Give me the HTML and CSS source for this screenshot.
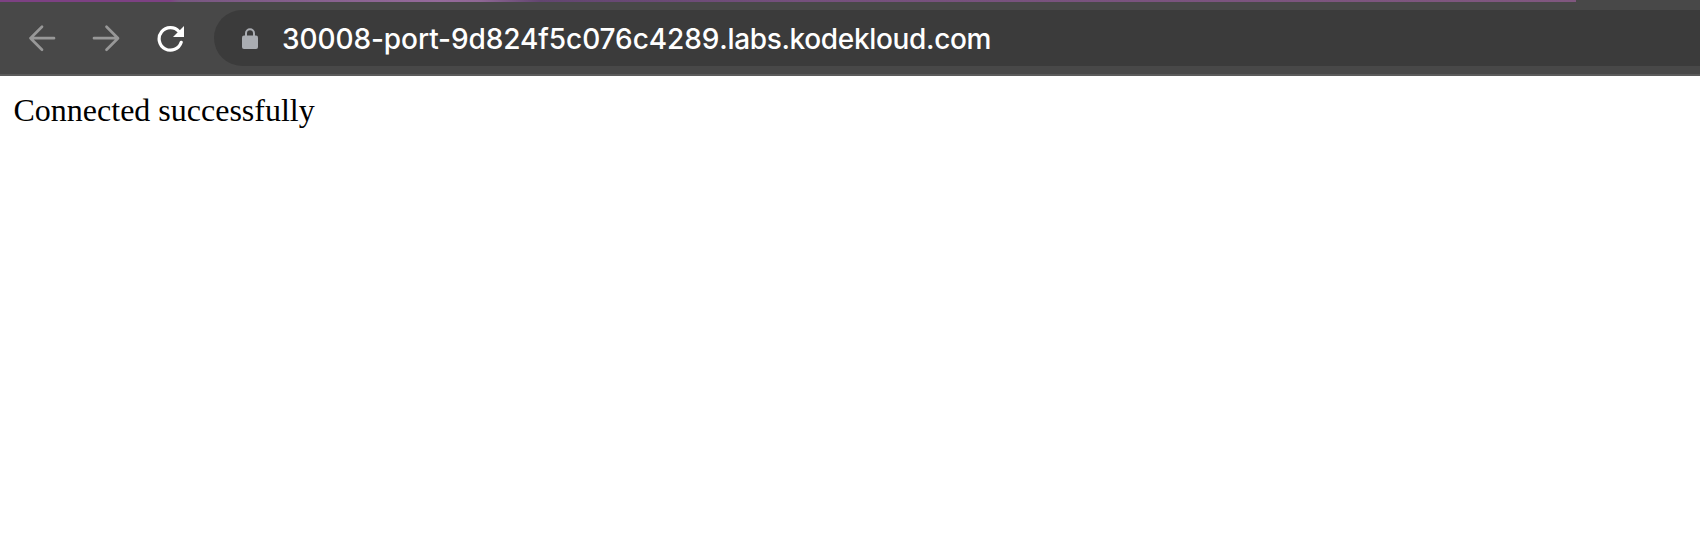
FILE: index.html
```
<!DOCTYPE html>
<html lang="en">
<head>
<meta charset="utf-8">
<title>Connected</title>
<link rel="stylesheet" href="styles.css">
</head>
<body>
<div class="tab-edge"><div class="theme-strip"></div></div>
<header class="toolbar">
  <nav class="controls">
    <svg class="icon" viewBox="0 0 30 30"><path d="M27 15.2H3.5M15 3.7L3.5 15.2 15 26.7"/></svg>
    <svg class="icon" viewBox="0 0 30 30"><path d="M3 15.2h23.5M15.5 3.7L27 15.2 15.5 26.7"/></svg>
    <svg class="icon reload" viewBox="0 0 30 30"><path class="arc" d="M24 8.5A11.3 11.3 0 1 0 26.2 19.3"/><path class="head" d="M29 3V14H18z"/></svg>
  </nav>
  <div class="address">
    <svg class="lock" viewBox="0 0 16 22"><path class="shackle" d="M4 8V5.2a4 4 0 0 1 8 0V8"/><rect y="7.5" width="16" height="13.5" rx="2"/></svg>
    <span class="url"><span class="subdomain">30008-port-9d824f5c076c4289</span>.labs.kodekloud.com</span>
  </div>
</header>
<main class="page">Connected successfully</main>
</body>
</html>
```
FILE: styles.css
```
body {
  margin: 0;
  background: #fff;
  overflow: hidden;
}
.tab-edge {
  height: 2px;
  background: #484848;
}
.theme-strip {
  width: 1576px;
  height: 2px;
  background: linear-gradient(90deg, #7d4183 0, #7d4183 170px, #775680 178px, #956a9b 440px, #8f6795 480px, #624570 540px, #75507d 800px, #80577f 1576px);
}
.toolbar {
  box-sizing: border-box;
  height: 74px;
  padding: 8px 0 8px 27px;
  display: flex;
  background: #484848;
  border-bottom: 2px solid #5b5b5b;
}
.controls {
  display: flex;
  gap: 34px;
  align-items: center;
  width: 187px;
}
.icon {
  flex: none;
  width: 30px;
  height: 30px;
  margin-top: -1px;
  fill: none;
  stroke: #989898;
  stroke-width: 2.7;
  stroke-linecap: round;
  stroke-linejoin: round;
}
.reload {
  stroke: #fff;
}
.arc {
  stroke-width: 3.2;
}
.head {
  fill: #fff;
  stroke: none;
}
.address {
  flex: 1;
  height: 56px;
  display: flex;
  align-items: center;
  background: #3b3b3b;
  border-radius: 28px 0 0 28px;
}
.lock {
  flex: none;
  width: 16px;
  height: 22px;
  margin: 1px 24px 0 28px;
  fill: #aaadb2;
}
.shackle {
  fill: none;
  stroke: #aaadb2;
  stroke-width: 2;
}
.url {
  padding-top: 1px;
  color: #fff;
  font: 500 28px/34px Inter, sans-serif;
  letter-spacing: -0.34px;
  white-space: nowrap;
}
.subdomain {
  letter-spacing: -0.08px;
}
.page {
  padding: 16px 14px 16px 13.5px;
  font: 32px/36px "Liberation Serif", serif;
  color: #000;
}
```
